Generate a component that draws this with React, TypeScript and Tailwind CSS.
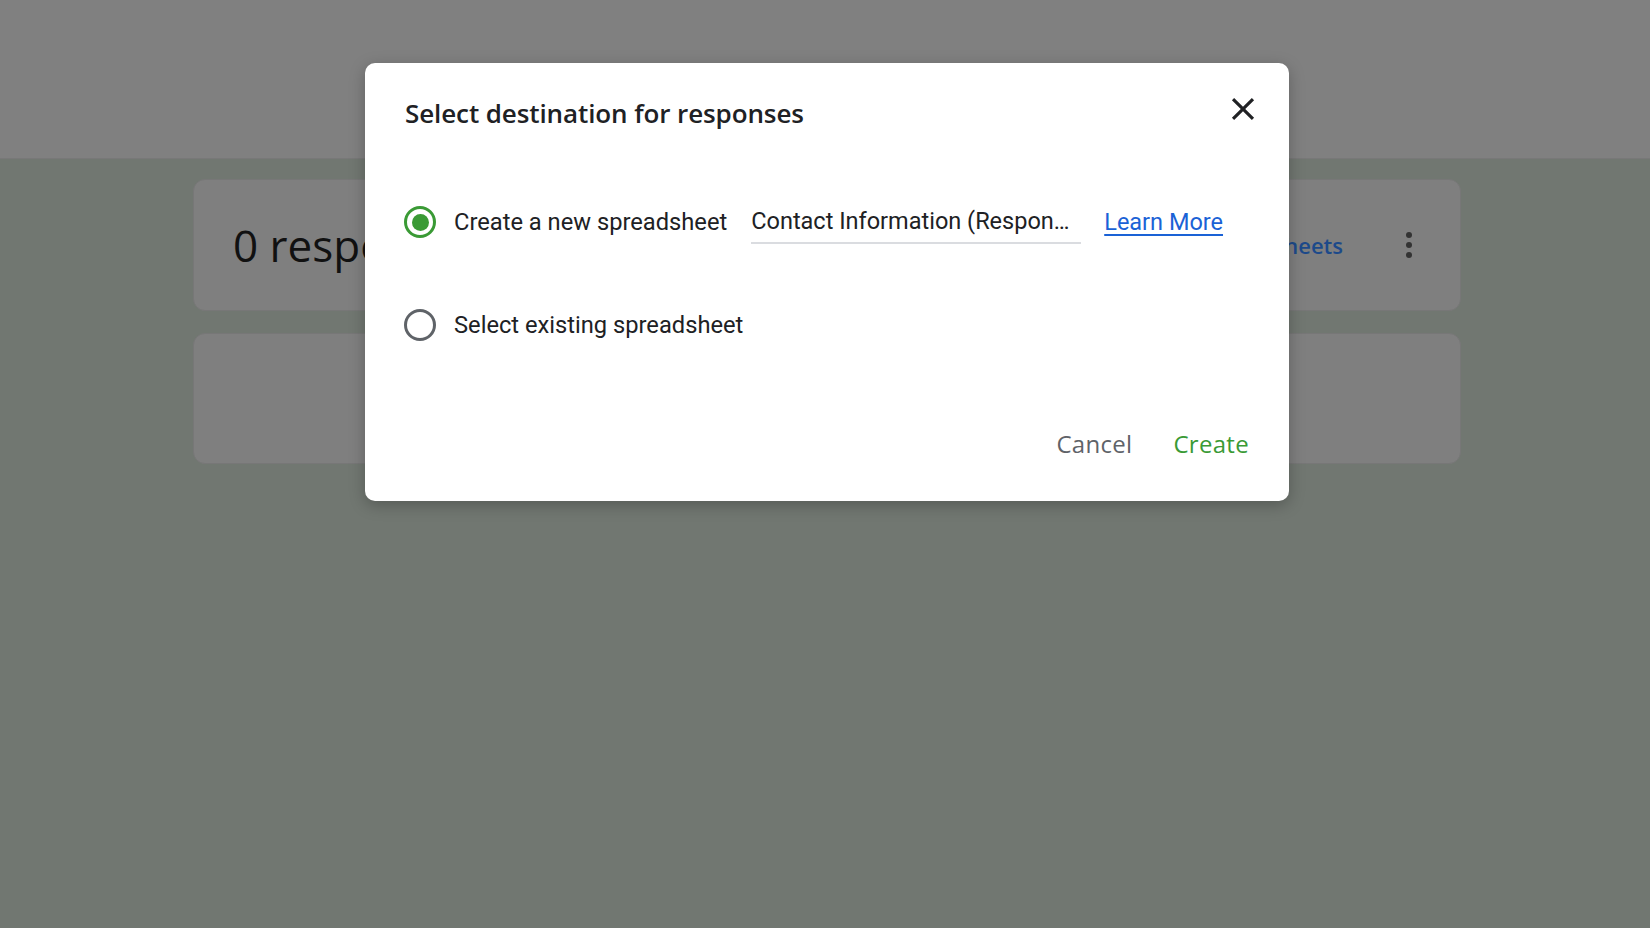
import React from "react";

function Radio({ checked }: { checked: boolean }) {
  return (
    <div
      className={
        "flex h-[32px] w-[32px] shrink-0 items-center justify-center rounded-full border-[3px] " +
        (checked ? "border-[#3a9a35]" : "border-[#5f6368]")
      }
    >
      {checked && <div className="h-[17px] w-[17px] rounded-full bg-[#3a9a35]" />}
    </div>
  );
}

export default function App() {
  return (
    <div className="relative h-[928px] w-[1650px] overflow-hidden bg-[#717771] font-['Roboto',sans-serif]">
      <div className="h-[159px] border-b border-[#787878] bg-[#808080]" />
      <div className="flex flex-col gap-[22px] pl-[193px] pt-[20px]">
        <div className="flex h-[132px] w-[1268px] items-center justify-between rounded-[12px] border border-[#777] bg-[#7f7f7f] pl-[39px] pr-[48px]">
          <div className="font-['Open_Sans',sans-serif] text-[44px] leading-none text-[#111]">0 responses</div>
          <div className="flex items-center gap-[63px]">
            <div className="font-['Open_Sans',sans-serif] text-[22px] font-semibold text-[#1d4a8a]">Link to Sheets</div>
            <div className="flex flex-col items-center gap-[4px]">
              <div className="h-[6px] w-[6px] rounded-full bg-[#333]" />
              <div className="h-[6px] w-[6px] rounded-full bg-[#333]" />
              <div className="h-[6px] w-[6px] rounded-full bg-[#333]" />
            </div>
          </div>
        </div>
        <div className="h-[131px] w-[1268px] rounded-[12px] border border-[#777] bg-[#7f7f7f]" />
      </div>

      <div className="absolute left-[365px] top-[63px] flex h-[438px] w-[924px] flex-col rounded-[10px] bg-white shadow-[0_4px_16px_rgba(0,0,0,0.25)]">
        <div className="flex h-[68px] items-start justify-between pl-[40px] pr-[27px] pt-[32px]">
          <div className="font-['Open_Sans',sans-serif] text-[26px] font-semibold leading-[36px] tracking-[-0.1px] text-[#202124]">
            Select destination for responses
          </div>
          <button className="mt-[-5px] flex h-[38px] w-[38px] items-center justify-center text-[#202124]">
            <svg viewBox="0 0 24 24" className="h-[38px] w-[38px]" fill="currentColor">
              <path d="M19 6.41 17.59 5 12 10.59 6.41 5 5 6.41 10.59 12 5 17.59 6.41 19 12 13.41 17.59 19 19 17.59 13.41 12z" />
            </svg>
          </button>
        </div>

        <div className="mt-[71px] flex h-[40px] items-center pl-[39px]">
          <Radio checked />
          <div className="ml-[18px] text-[23.7px] leading-[32px] text-[#202124]">Create a new spreadsheet</div>
          <div className="ml-[24px] flex h-[44px] w-[330px] shrink-0 items-center border-b-2 border-[#dadce0] text-[23.5px] leading-[32px] text-[#202124]">
            Contact Information (Respon…
          </div>
          <a className="ml-[23px] text-[23.5px] leading-[32px] text-[#1a62d6] underline underline-offset-[4px]">Learn More</a>
        </div>

        <div className="mt-[63px] flex h-[40px] items-center pl-[39px]">
          <Radio checked={false} />
          <div className="ml-[18px] text-[23.7px] leading-[32px] text-[#202124]">Select existing spreadsheet</div>
        </div>

        <div className="mt-auto flex justify-end gap-[41px] pb-[41px] pr-[40px] font-['Open_Sans',sans-serif] text-[24px] font-medium leading-[32px] tracking-[0.3px]">
          <button className="text-[#5f6368]">Cancel</button>
          <button className="text-[#3a9a35]">Create</button>
        </div>
      </div>
    </div>
  );
}
